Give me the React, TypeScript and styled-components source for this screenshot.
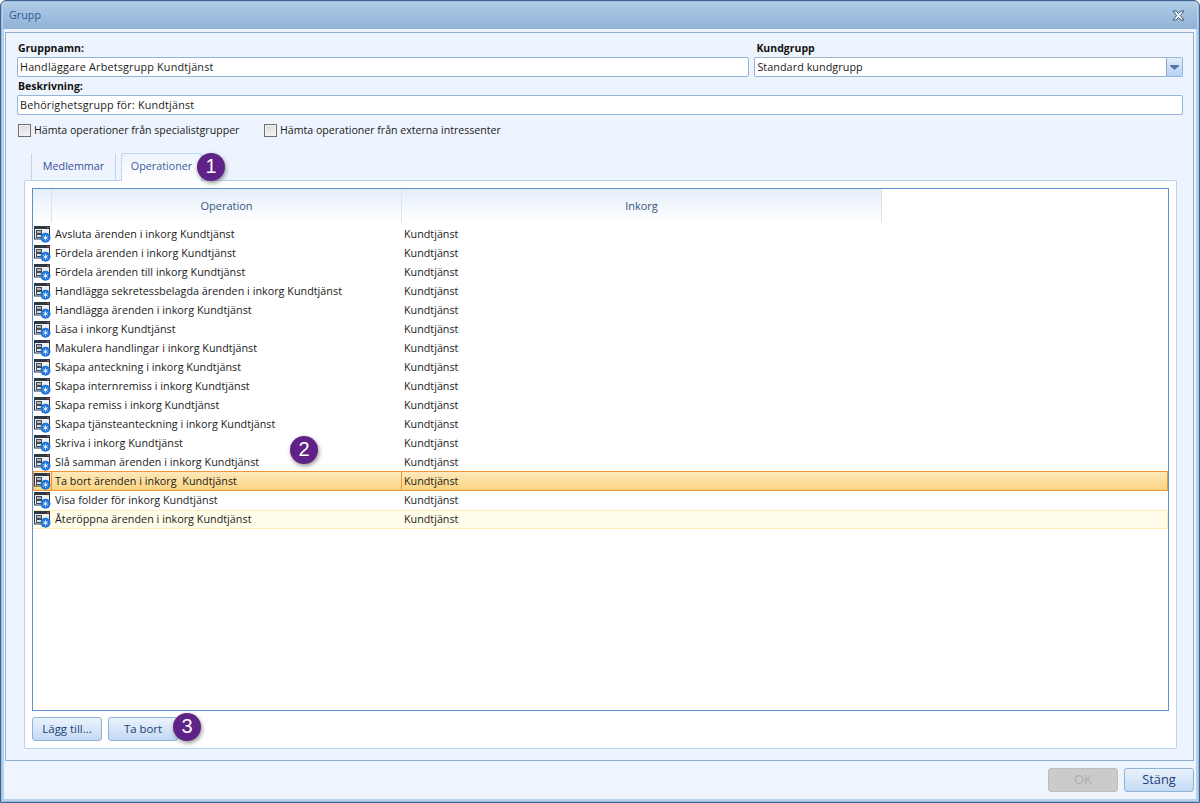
import styled, { createGlobalStyle } from "styled-components";

const GlobalStyle = createGlobalStyle`
  html, body {
    margin: 0;
    padding: 0;
    height: 100%;
    overflow: hidden;
    background: #fff;
  }
  * {
    box-sizing: border-box;
  }
`;

const fontStack = `"Open Sans", "Noto Sans", "Liberation Sans", sans-serif`;

const Window = styled.div`
  width: 1200px;
  height: 803px;
  display: flex;
  flex-direction: column;
  font-family: ${fontStack};
  font-size: 10.75px;
  color: #1a1a1a;
  background: #eef5fe;
  border: 1px solid #3f6490;
  border-radius: 6px 6px 0 0;
  box-shadow: inset 0 0 0 1px #9ebcdc, inset 0 0 0 3px #b9d2ea;
`;

const TitleBar = styled.div`
  height: 27px;
  flex: none;
  margin: 1px 2px 0;
  padding: 0 12px 1px 6px;
  display: flex;
  align-items: center;
  justify-content: space-between;
  background: linear-gradient(#aecbe5, #92b3d7);
  border-radius: 5px 5px 0 0;
  color: #2c5a94;
`;

const Body = styled.div`
  flex: 1;
  margin: 3px 5px 0 4px;
  padding: 7px 10px 11px 11px;
  display: flex;
  flex-direction: column;
  background: #edf4fd;
  border: 1px solid #90aed2;
`;

const TopRow = styled.div`
  display: flex;
  gap: 5px;
`;

const Field = styled.div<{ $width: number }>`
  display: flex;
  flex-direction: column;
  width: ${(p) => p.$width}px;
`;

const Label = styled.label<{ $inset?: boolean }>`
  height: 17px;
  padding-left: ${(p) => (p.$inset ? 2 : 1)}px;
  font-weight: 700;
  font-size: 10.5px;
  line-height: 17px;
  color: #111;
`;

const Input = styled.div`
  height: 20px;
  padding: 0 2px 1px;
  display: flex;
  align-items: center;
  font-size: 10.8px;
  letter-spacing: 0.18px;
  background: #fff;
  border: 1px solid #93b5da;
  border-radius: 2px;
  color: #1a1a1a;
  white-space: nowrap;
`;

const Combo = styled(Input)`
  justify-content: space-between;
  padding: 0 0 0 2px;
  letter-spacing: 0.05px;
  border-top-color: #a3b4cd;
`;

const ComboText = styled.span`
  padding-bottom: 1px;
`;

const ComboButton = styled.div`
  width: 16px;
  height: 18px;
  display: flex;
  align-items: center;
  justify-content: center;
  background: linear-gradient(#e2eefb, #b4d1f2);
  border-left: 1px solid #8fa9c8;
`;

const DescRow = styled.div`
  margin-top: 1px;
`;

const CheckRow = styled.div`
  margin-top: 8px;
  height: 14px;
  display: flex;
  align-items: center;
  padding-left: 1px;
`;

const CheckItem = styled.div<{ $width: number }>`
  width: ${(p) => p.$width}px;
  display: flex;
  align-items: center;
  gap: 3px;
  font-size: 10.6px;
  line-height: 12px;
  white-space: nowrap;
`;

const CheckBox = styled.span`
  width: 13px;
  height: 13px;
  flex: none;
  background: linear-gradient(#dedede, #f1f1f1);
  border: 1px solid #6f6f6f;
  box-shadow: inset 0 0 0 1px #f4f4f4;
`;

const TabStrip = styled.div`
  position: relative;
  height: 27px;
  margin-top: 16px;
  padding-left: 14px;
  display: flex;
  align-items: flex-start;
  gap: 5px;
`;

const Tab = styled.div<{ $active?: boolean; $width: number }>`
  width: ${(p) => p.$width}px;
  height: ${(p) => (p.$active ? 28 : 27)}px;
  display: flex;
  align-items: center;
  justify-content: center;
  padding-bottom: ${(p) => (p.$active ? 4 : 3)}px;
  color: ${(p) => (p.$active ? "#37629a" : "#3a4f9a")};
  border: 1px solid #bcd6f0;
  border-bottom: none;
  border-top-color: ${(p) => (p.$active ? "#bcd6f0" : "transparent")};
  border-radius: ${(p) => (p.$active ? "3px 3px 0 0" : "0")};
  background: ${(p) =>
    p.$active ? "linear-gradient(#edf4fd, #fff)" : "#edf4fd"};
  position: relative;
  z-index: ${(p) => (p.$active ? 1 : 0)};
`;

const Badge = styled.div<{ $left: number; $top: number }>`
  position: absolute;
  left: ${(p) => p.$left}px;
  top: ${(p) => p.$top}px;
  width: 28px;
  height: 28px;
  padding-bottom: 2px;
  display: flex;
  align-items: center;
  justify-content: center;
  border-radius: 50%;
  background: #5f2286;
  color: #fff;
  font-family: "Liberation Sans", sans-serif;
  font-size: 20px;
  box-shadow: 1px 2px 4px rgba(60, 60, 60, 0.55);
  z-index: 5;
`;

const TabPanel = styled.div`
  flex: 1;
  margin: 0 6px 0 7px;
  padding: 7px;
  display: flex;
  flex-direction: column;
  background: #fff;
  border: 1px solid #b9d3ef;
  border-radius: 2px;
`;

const Grid = styled.div`
  position: relative;
  flex: 1;
  background: #fff;
  border: 1px solid #5d91cd;
`;

const HeaderRow = styled.div`
  height: 33px;
  display: flex;
`;

const HeaderCell = styled.div<{ $width: number }>`
  width: ${(p) => p.$width}px;
  display: flex;
  align-items: center;
  justify-content: center;
  font-size: 11px;
  color: #37557f;
  background: linear-gradient(#e4eefa, #fff);
  border-right: 1px solid #dbe4ee;
`;

const Rows = styled.div`
  padding-top: 3px;
`;

const Row = styled.div<{ $state?: "selected" | "hover" }>`
  height: ${(p) => (p.$state === "selected" ? 20 : 19)}px;
  margin-top: ${(p) => (p.$state === "selected" ? "-1px" : "0")};
  display: flex;
  align-items: center;
  color: #1a1a1a;
  border: ${(p) =>
    p.$state === "selected"
      ? "1px solid #f29536"
      : p.$state === "hover"
      ? "1px solid #fbeeb8"
      : "none"};
  border-left-width: 0;
  background: ${(p) =>
    p.$state === "selected"
      ? "linear-gradient(#fde9bd, #fbd47f)"
      : p.$state === "hover"
      ? "#fffdea"
      : "transparent"};
`;

const IconCell = styled.div<{ $selected?: boolean }>`
  width: 19px;
  height: 100%;
  flex: none;
  display: flex;
  align-items: center;
  justify-content: center;
  border: ${(p) => (p.$selected ? "1px solid #f29536" : "none")};
  border-width: ${(p) => (p.$selected ? "0 1px 0 1px" : "0")};
`;

const NameCell = styled.div<{ $selected?: boolean }>`
  width: 349px;
  flex: none;
  padding: 0 0 ${(p) => (p.$selected ? 0 : 2)}px 3px;
  letter-spacing: 0.03px;
  white-space: pre;
`;

const InkorgCell = styled.div<{ $selected?: boolean }>`
  height: 100%;
  display: flex;
  align-items: center;
  padding: 0 0 ${(p) => (p.$selected ? 0 : 2)}px 2px;
  border-left: 1px solid ${(p) => (p.$selected ? "#f29536" : "transparent")};
`;

const GridButtons = styled.div`
  position: relative;
  height: 24px;
  margin-top: 6px;
  display: flex;
  gap: 6px;
`;

const Button = styled.button<{ $disabled?: boolean; $large?: boolean }>`
  width: 70px;
  height: 24px;
  padding: 0 0 2px;
  font-family: ${fontStack};
  font-size: ${(p) => (p.$large ? 12.8 : 11.4)}px;
  color: ${(p) => (p.$disabled ? "#aeaeae" : "#1d3f78")};
  background: ${(p) =>
    p.$disabled ? "#cbcbcb" : "linear-gradient(#ebf3fc, #c3d9f3)"};
  border: 1px solid ${(p) => (p.$disabled ? "#bdbdbd" : "#8fb2d8")};
  border-radius: 3px;
`;

const Footer = styled.div`
  height: 41px;
  flex: none;
  padding: 7px 5px 0 0;
  display: flex;
  justify-content: flex-end;
  gap: 6px;
`;

const rows = [
  "Avsluta ärenden i inkorg Kundtjänst",
  "Fördela ärenden i inkorg Kundtjänst",
  "Fördela ärenden till inkorg Kundtjänst",
  "Handlägga sekretessbelagda ärenden i inkorg Kundtjänst",
  "Handlägga ärenden i inkorg Kundtjänst",
  "Läsa i inkorg Kundtjänst",
  "Makulera handlingar i inkorg Kundtjänst",
  "Skapa anteckning i inkorg Kundtjänst",
  "Skapa internremiss i inkorg Kundtjänst",
  "Skapa remiss i inkorg Kundtjänst",
  "Skapa tjänsteanteckning i inkorg Kundtjänst",
  "Skriva i inkorg Kundtjänst",
  "Slå samman ärenden i inkorg Kundtjänst",
  "Ta bort ärenden i inkorg  Kundtjänst",
  "Visa folder för inkorg Kundtjänst",
  "Återöppna ärenden i inkorg Kundtjänst",
];

const OperationIcon = () => (
  <svg width="17" height="17" viewBox="0 0 17 17">
    <rect x="0.5" y="0.5" width="15" height="12.5" fill="#eef1f4" stroke="#2e3742" />
    <rect x="1" y="1" width="14" height="2" fill="#2e3742" />
    <rect x="13" y="1" width="2" height="1" fill="#d04a3a" />
    <rect x="2.5" y="4.5" width="5" height="3" fill="#aeb7c0" stroke="#3f4a55" strokeWidth="1" />
    <rect x="2.5" y="8.5" width="5" height="3" fill="#dfe3e7" stroke="#3f4a55" strokeWidth="1" />
    <circle cx="11.5" cy="11.8" r="5" fill="#1f74d8" />
    <path
      d="M11.5 8.8v6M8.9 10.3l5.2 3M14.1 10.3l-5.2 3"
      stroke="#dcecff"
      strokeWidth="0.8"
    />
    <circle cx="11.5" cy="11.8" r="1.1" fill="#fff" />
  </svg>
);

const CloseIcon = () => (
  <svg width="13" height="11" viewBox="0 0 13 11">
    <path
      d="M1 1h3.2L6.5 3.6 8.8 1H12L8.3 5.5 12 10H8.8L6.5 7.4 4.2 10H1l3.7-4.5z"
      fill="#f4f7fa"
      stroke="#3d5670"
      strokeWidth="1"
      strokeLinejoin="round"
    />
  </svg>
);

const ComboArrow = () => (
  <svg width="9" height="5" viewBox="0 0 9 5">
    <path d="M0 0h9v1L4.5 5 0 1z" fill="#5577ac" />
  </svg>
);

const App = () => {
  return (
    <Window>
      <GlobalStyle />
      <TitleBar>
        <span>Grupp</span>
        <CloseIcon />
      </TitleBar>
      <Body>
        <TopRow>
          <Field $width={733}>
            <Label>Gruppnamn:</Label>
            <Input>Handläggare Arbetsgrupp Kundtjänst</Input>
          </Field>
          <Field $width={429}>
            <Label $inset>Kundgrupp</Label>
            <Combo>
              <ComboText>Standard kundgrupp</ComboText>
              <ComboButton>
                <ComboArrow />
              </ComboButton>
            </Combo>
          </Field>
        </TopRow>
        <DescRow>
          <Field $width={1166}>
            <Label>Beskrivning:</Label>
            <Input>Behörighetsgrupp för: Kundtjänst</Input>
          </Field>
        </DescRow>
        <CheckRow>
          <CheckItem $width={246}>
            <CheckBox />
            Hämta operationer från specialistgrupper
          </CheckItem>
          <CheckItem $width={300}>
            <CheckBox />
            Hämta operationer från externa intressenter
          </CheckItem>
        </CheckRow>
        <TabStrip>
          <Tab $width={85}>Medlemmar</Tab>
          <Tab $active $width={81}>
            Operationer
          </Tab>
          <Badge $left={180} $top={0}>
            1
          </Badge>
        </TabStrip>
        <TabPanel>
          <Grid>
            <HeaderRow>
              <HeaderCell $width={19} />
              <HeaderCell $width={350}>Operation</HeaderCell>
              <HeaderCell $width={480}>Inkorg</HeaderCell>
            </HeaderRow>
            <Rows>
              {rows.map((name, index) => {
                const state =
                  index === 13 ? "selected" : index === 15 ? "hover" : undefined;
                return (
                  <Row key={index} $state={state}>
                    <IconCell $selected={index === 13}>
                      <OperationIcon />
                    </IconCell>
                    <NameCell $selected={index === 13}>{name}</NameCell>
                    <InkorgCell $selected={index === 13}>Kundtjänst</InkorgCell>
                  </Row>
                );
              })}
            </Rows>
            <Badge $left={257} $top={247}>
              2
            </Badge>
          </Grid>
          <GridButtons>
            <Button>Lägg till...</Button>
            <Button>Ta bort</Button>
            <Badge $left={141} $top={-4}>
              3
            </Badge>
          </GridButtons>
        </TabPanel>
      </Body>
      <Footer>
        <Button $disabled $large>
          OK
        </Button>
        <Button $large>Stäng</Button>
      </Footer>
    </Window>
  );
};

export default App;
